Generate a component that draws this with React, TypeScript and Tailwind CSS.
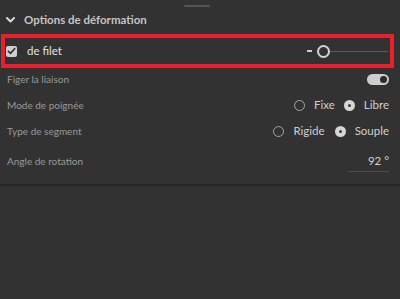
import React from 'react';

const Radio: React.FC<{ checked?: boolean }> = ({ checked }) =>
  checked ? (
    <span className="w-[11px] h-[11px] rounded-full bg-[#d6d6d6] flex items-center justify-center">
      <span className="w-[3px] h-[3px] rounded-full bg-[#3a3a3a]" />
    </span>
  ) : (
    <span className="w-[11px] h-[11px] rounded-full border-[1.5px] border-[#a8a8a8]" />
  );

const Row: React.FC<{ label: string; className?: string; children?: React.ReactNode }> = ({ label, className, children }) => (
  <div className={`h-[20px] flex items-center justify-between pl-[7px] pr-[11px] ${className ?? ''}`}>
    <span className="text-[10px] text-[#999999]">{label}</span>
    <div className="flex items-center">{children}</div>
  </div>
);

export default function App() {
  return (
    <div className="w-[400px] h-[299px] bg-[#323232] flex flex-col overflow-hidden font-['Lato',sans-serif]">
      {/* grab handle */}
      <div className="h-[8px] pt-[5px] pl-[184px]">
        <div className="w-[26px] h-[2px] bg-[#555555] rounded-full" />
      </div>

      {/* section header */}
      <div className="h-[24px] flex items-center pl-[6px] gap-[9px]">
        <svg width="9" height="6" viewBox="0 0 9 6" fill="none">
          <path d="M1 1l3.5 3.5L8 1" stroke="#d8d8d8" strokeWidth="2" strokeLinecap="round" strokeLinejoin="round" />
        </svg>
        <span className="text-[11.5px] font-bold text-[#c4c4c4]">Options de déformation</span>
      </div>

      {/* highlighted row */}
      <div className="mt-[2px] ml-[1px] w-[393px] h-[34px] border-4 border-[#e8202e] flex items-center justify-between pl-[1px] pr-[2px]">
        <div className="flex items-center gap-[10px]">
          <span className="w-[11px] h-[11px] rounded-[2px] bg-[#cfcfcf] flex items-center justify-center">
            <svg width="9" height="8" viewBox="0 0 9 8" fill="none">
              <path d="M1.3 4.2l2.2 2.2L7.8 1.5" stroke="#2e2e2e" strokeWidth="1.6" strokeLinecap="round" strokeLinejoin="round" />
            </svg>
          </span>
          <span className="text-[11.5px] text-[#e2e2e2]">de filet</span>
        </div>
        <div className="flex items-center">
          <span className="w-[5px] h-[1.5px] bg-[#cfcfcf]" />
          <span className="ml-[5px] w-[13px] h-[13px] rounded-full border-2 border-[#d4d4d4]" />
          <span className="w-[58px] h-px bg-[#5c5c5c]" />
        </div>
      </div>

      <Row label="Figer la liaison" className="mt-[1px]">
        <span className="w-[22px] h-[11px] rounded-full bg-[#cdcdcd] flex items-center justify-end pr-[2px]">
          <span className="w-[7px] h-[7px] rounded-full bg-[#2b2b2b]" />
        </span>
      </Row>

      <Row label="Mode de poignée" className="mt-[6px]">
        <Radio />
        <span className="ml-[9px] text-[11.5px] text-[#cfcfcf]">Fixe</span>
        <span className="ml-[9px]"><Radio checked /></span>
        <span className="ml-[9px] text-[11.5px] text-[#cfcfcf]">Libre</span>
      </Row>

      <Row label="Type de segment" className="mt-[6px]">
        <Radio />
        <span className="ml-[9px] text-[11.5px] text-[#cfcfcf]">Rigide</span>
        <span className="ml-[10px]"><Radio checked /></span>
        <span className="ml-[9px] text-[11.5px] text-[#cfcfcf]">Souple</span>
      </Row>

      <Row label="Angle de rotation" className="mt-[10px]">
        <div className="w-[41px] flex flex-col items-end">
          <span className="text-[11.5px] text-[#d2d2d2] leading-[16px]">92 °</span>
        </div>
      </Row>
      <div className="ml-[348px] w-[41px] h-px bg-[#4a4a4a]" />

      {/* panel divider */}
      <div className="mt-[12px] h-[2px] bg-[#262626] shadow-[0_1px_2px_rgba(0,0,0,0.35)]" />
      <div className="flex-1 bg-[#323232]" />
    </div>
  );
}
